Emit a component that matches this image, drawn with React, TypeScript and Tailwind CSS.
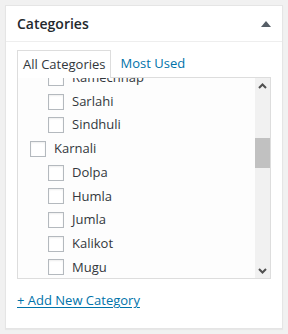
const rows: [string, boolean][] = [
  ["Ramechhap", true],
  ["Sarlahi", true],
  ["Sindhuli", true],
  ["Karnali", false],
  ["Dolpa", true],
  ["Humla", true],
  ["Jumla", true],
  ["Kalikot", true],
  ["Mugu", true],
  ["Rukum", true],
];

function Chevron({ up }: { up?: boolean }) {
  return (
    <svg width="9" height="6" viewBox="0 0 9 6" className="block">
      <path
        d={up ? "M1 5 L4.5 1.5 L8 5" : "M1 1 L4.5 4.5 L8 1"}
        fill="none"
        stroke="#505050"
        strokeWidth="2"
      />
    </svg>
  );
}

export default function App() {
  return (
    <div
      className="w-[288px] h-[334px] bg-[#f1f1f1] p-[5px] text-[13px] text-[#32373c]"
      style={{ fontFamily: '"Open Sans", "Noto Sans", sans-serif' }}
    >
      <div className="h-[324px] bg-white border border-[#e5e5e5] shadow-[0_1px_1px_rgba(0,0,0,0.04)] flex flex-col">
        {/* header */}
        <div className="h-[36px] border-b border-[#eeeeee] flex items-center justify-between pl-[11px] pr-[11px]">
          <h2 className="text-[14px] font-semibold text-[#23282d] leading-none">Categories</h2>
          <svg width="10" height="6" viewBox="0 0 10 6">
            <polygon points="0,6 5,0 10,6" fill="#555d66" />
          </svg>
        </div>

        <div className="px-[11px] pt-[8px]">
          {/* tabs */}
          <div className="flex items-end h-[27px]">
            <div className="h-[28px] border border-b-0 border-[#dddddd] bg-white px-[5px] flex items-center relative z-10 -mb-px">
              All Categories
            </div>
            <div className="px-[9px] h-[27px] flex items-center text-[#0073aa]">Most Used</div>
          </div>

          {/* list */}
          <div className="h-[202px] border border-[#dddddd] bg-[#fdfdfd] flex">
            <div className="flex-1 overflow-hidden pl-[12px]">
              <div className="-mt-[12px]">
                {rows.map(([name, child]) => (
                  <div
                    key={name}
                    className={"h-[23.7px] flex items-center " + (child ? "pl-[18px]" : "")}
                  >
                    <span className="w-4 h-4 border border-[#b4b9be] bg-white shrink-0 mr-[8px] shadow-[inset_0_1px_2px_rgba(0,0,0,0.07)]" />
                    <span>{name}</span>
                  </div>
                ))}
              </div>
            </div>
            <div className="w-[15px] bg-[#f1f1f1] flex flex-col items-center">
              <div className="h-[15px] flex items-center justify-center">
                <Chevron up />
              </div>
              <div className="flex-1 w-full pt-[45px]">
                <div className="h-[30px] w-full bg-[#c1c1c1]" />
              </div>
              <div className="h-[15px] flex items-center justify-center">
                <Chevron />
              </div>
            </div>
          </div>

          <div className="pt-[12px]">
            <a href="#" className="text-[#0073aa] underline underline-offset-2">
              + Add New Category
            </a>
          </div>
        </div>
      </div>
    </div>
  );
}
